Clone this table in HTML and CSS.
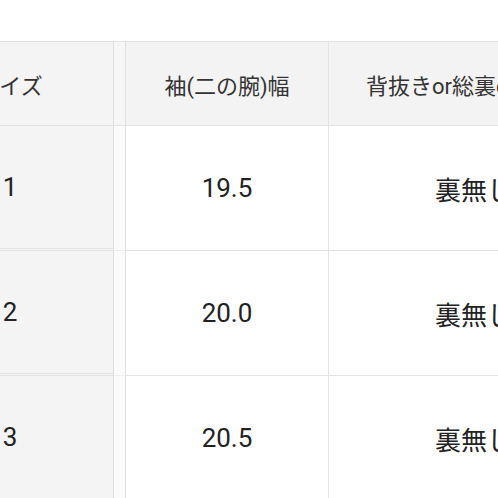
FILE: index.html
```html
<!DOCTYPE html>
<html lang="ja">
<head>
<meta charset="utf-8">
<link rel="stylesheet" href="styles.css">
</head>
<body>
<div class="viewport">
  <div class="table">
    <div class="cell head first">サイズ</div>
    <div class="gap head-gap"></div>
    <div class="cell head mid">袖(二の腕)幅</div>
    <div class="cell head">背抜きor総裏or裏無し</div>

    <div class="cell body first">1</div>
    <div class="gap"></div>
    <div class="cell body mid">19.5</div>
    <div class="cell body">裏無し</div>

    <div class="cell body first">2</div>
    <div class="gap"></div>
    <div class="cell body mid">20.0</div>
    <div class="cell body">裏無し</div>

    <div class="cell body first">3</div>
    <div class="gap"></div>
    <div class="cell body mid">20.5</div>
    <div class="cell body">裏無し</div>
  </div>
</div>
</body>
</html>
```

FILE: styles.css
```css
html, body {
  margin: 0;
  padding: 0;
  background: #ffffff;
}

.viewport {
  width: 498px;
  height: 498px;
  overflow: hidden;
  padding-top: 41px;
  box-sizing: border-box;
}

.table {
  display: grid;
  grid-template-columns: 207px 11px 204px 290px;
  grid-template-rows: 85px 125px 125px 125px;
  margin-left: -93px;
  width: max-content;
  font-family: Roboto, "Noto Sans CJK JP", sans-serif;
}

.cell {
  display: flex;
  align-items: center;
  justify-content: center;
  box-sizing: border-box;
  white-space: nowrap;
  border-bottom: 1px solid #e3e3e3;
}

.head {
  background: #f3f3f3;
  border-top: 1px solid #e0e0e0;
  font-size: 22px;
  color: #333333;
}

.body {
  background: #ffffff;
  font-size: 26px;
  color: #222222;
}

.first {
  background: #f4f4f4;
  border-right: 1px solid #dedede;
}

.body.first {
  border-bottom: 3px double #e3e3e3;
}

.mid {
  border-left: 1px solid #e0e0e0;
  border-right: 1px solid #e3e3e3;
}

.gap {
  background: #fbfbfb;
  border-bottom: 1px solid #eeeeee;
  box-sizing: border-box;
}

.head-gap {
  background: #f6f6f6;
  border-top: 1px solid #e0e0e0;
  border-bottom: 1px solid #e3e3e3;
}
```
